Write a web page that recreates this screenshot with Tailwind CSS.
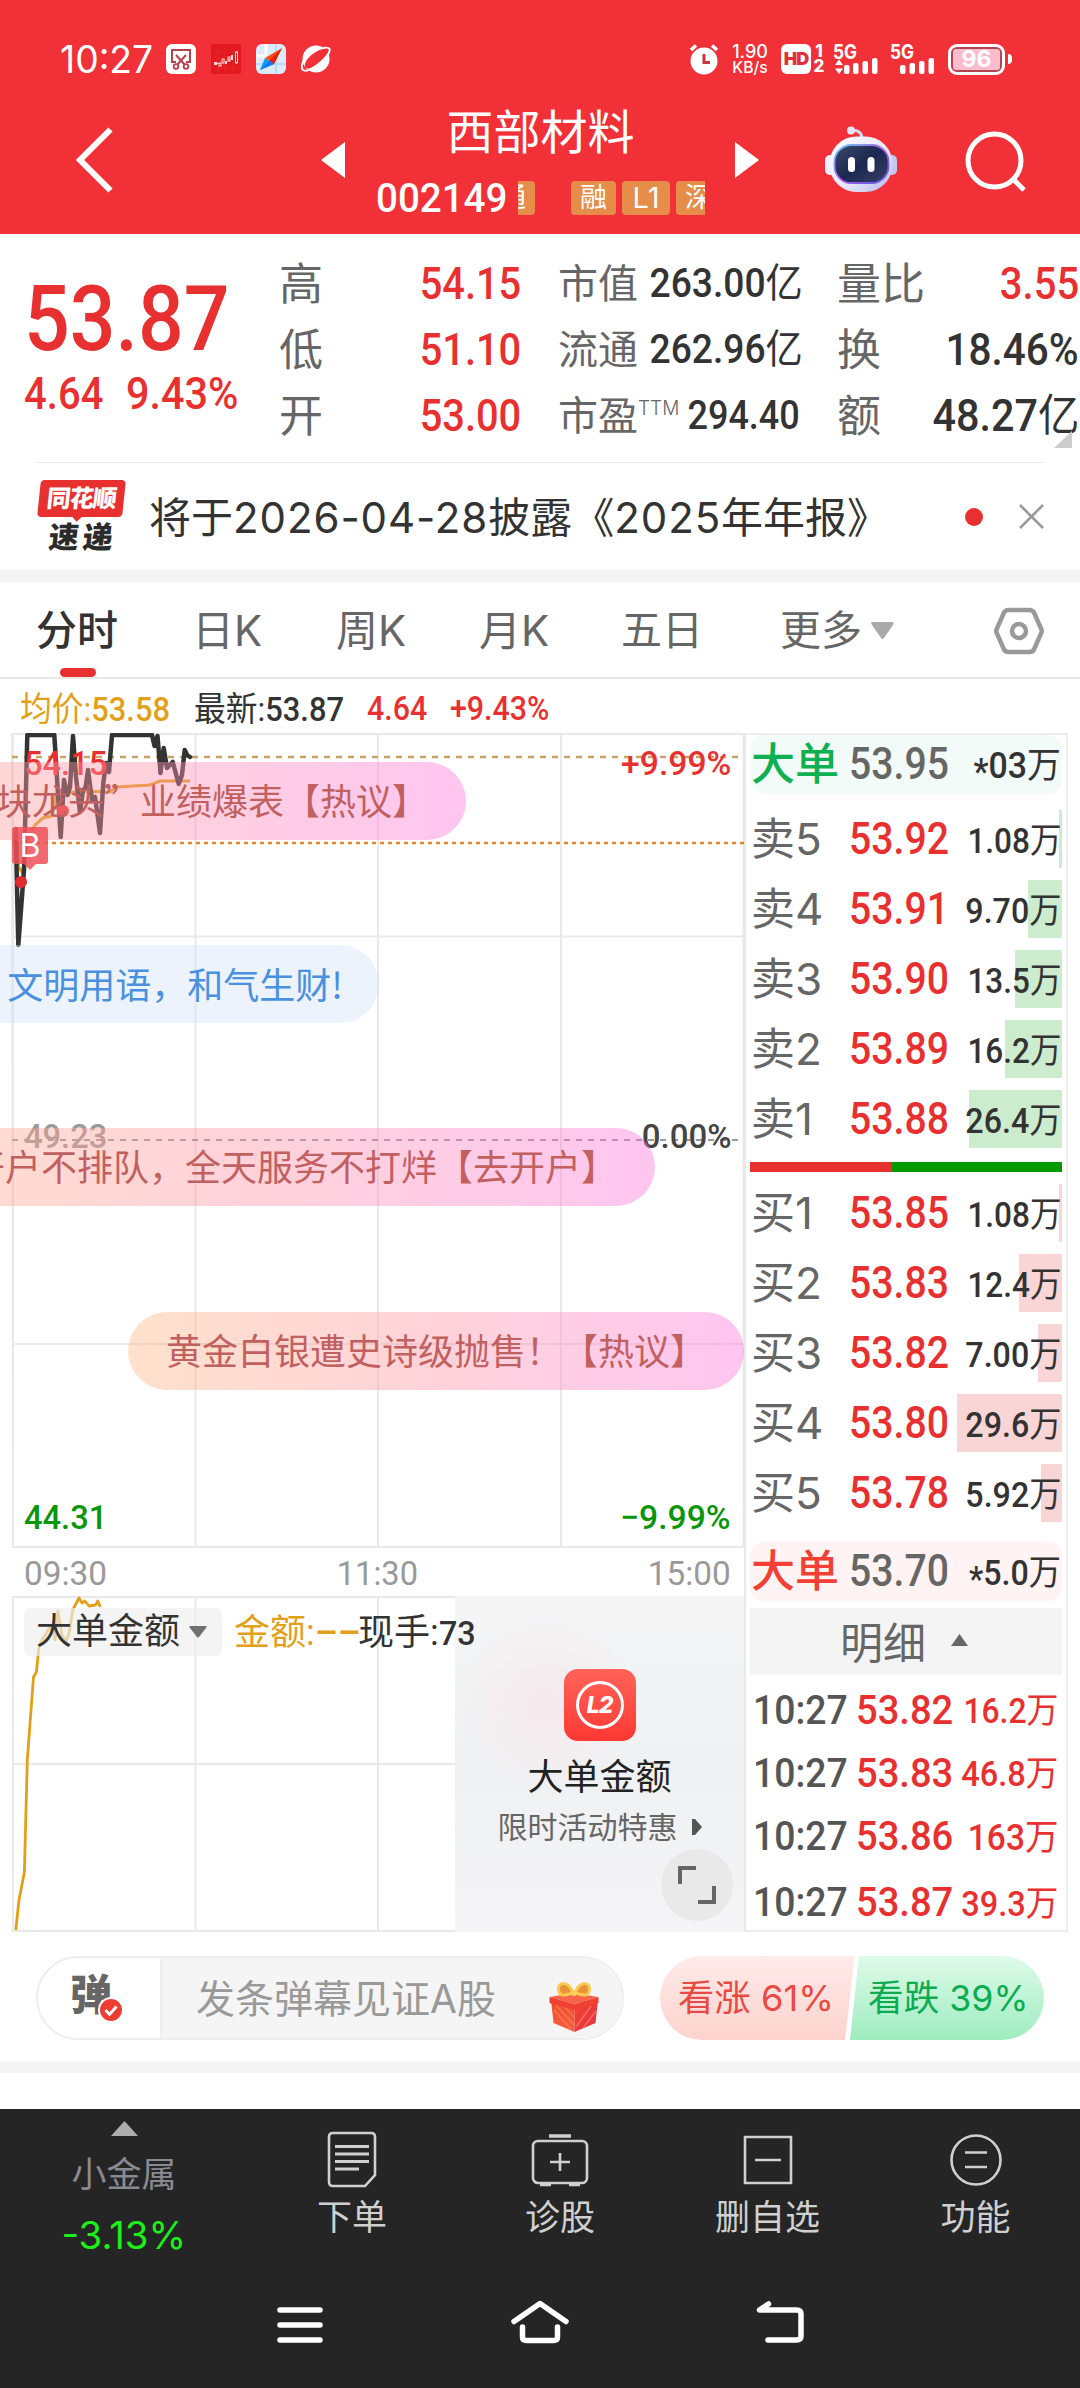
<!DOCTYPE html>
<html lang="zh-CN">
<head>
<meta charset="utf-8">
<title>西部材料 002149</title>
<script src="https://cdn.jsdelivr.net/npm/@tailwindcss/browser@4"></script>
</head>
<body class="bg-white">
<div class="relative flex h-[2388px] w-[1080px] flex-col overflow-hidden bg-white leading-none whitespace-nowrap text-[#333] [font-family:Inter,'Noto_Sans_CJK_SC',sans-serif]">

  <!-- Header -->
  <header class="h-[234px] shrink-0 bg-[#f23038] text-white">
    <div class="flex h-[100px] items-center pt-[18px] pl-[60px]">
      <span class="w-[106px] origin-left scale-x-[.98] text-[38px]">10:27</span>
      <svg class="mr-[15px]" width="30" height="30" viewBox="0 0 30 30" fill="none"><rect width="30" height="30" rx="6" fill="#fff"/><path d="M10 18H6V6h18v12h-4M10 11l9 10M20 11l-9 10" stroke="#b84048" stroke-width="2"/><circle cx="10" cy="22.500" r="2.300" stroke="#b84048" stroke-width="1.800"/><circle cx="20" cy="22.500" r="2.300" stroke="#b84048" stroke-width="1.800"/></svg>
      <svg class="mr-[15px]" width="30" height="30" viewBox="0 0 30 30" fill="none"><rect width="30" height="30" rx="2" fill="#e2191e"/><path d="M0 8h30M0 16h30M0 24h30M7 0v30M14 0v30M22 0v30" stroke="#e72a2f" stroke-width=".8"/><g fill="#ffd9d5"><rect x="3" y="18" width="3" height="3"/><rect x="14" y="17" width="2" height="3"/><rect x="20" y="11" width="2" height="5"/></g><g stroke="#ffd9d5" stroke-width="1"><rect x="8" y="19" width="2" height="3"/><path d="M6 19.500h2M18 14.500v3"/><rect x="11" y="15" width="2" height="4"/><rect x="17" y="13" width="2" height="4"/><rect x="24.500" y="8" width="2" height="11"/></g></svg>
      <svg class="mr-[15px]" width="30" height="30" viewBox="0 0 30 30"><rect width="30" height="30" rx="6" fill="#dcebfb"/><path d="M10 0v12H0" fill="none" stroke="#fff" stroke-width="3"/><path d="M20 0v30M0 20h30" stroke="#a9d9f3" stroke-width="1.500"/><path d="M26 4L9 14l9 6z" fill="#fb4d10"/><path d="M26 4L13 17l5 3z" fill="#e5200e"/><path d="M4 26L9 14l9 6z" fill="#0a9bfb"/><path d="M4 26l9-9 5 3z" fill="#0a78f2"/></svg>
      <svg width="30" height="30" viewBox="0 0 30 30"><circle cx="15" cy="15" r="13.500" fill="#fff"/><path d="M5 24C1 20 8 12 14 8.500S27 3 28 6 21 17 16 20.500 8 26 5 24z" fill="#f23038"/><path d="M4 14C1 19 0 24 2 26c3 2 9-1 15-5.500C24 15 30 8 28.500 5 27.500 3 24.500 3.500 22 4" fill="none" stroke="#fff" stroke-width="2"/></svg>

      <svg class="ml-[358px]" width="30" height="31" viewBox="0 0 30 31" fill="none"><circle cx="15" cy="17" r="13.500" fill="#fff"/><path d="M2 6l5-4.500M28 6l-5-4.500" stroke="#fff" stroke-width="3.500"/><path d="M15 10v8.500h6" stroke="#c9353c" stroke-width="3"/></svg>
      <span class="ml-[12px] flex w-[38px] flex-col items-center gap-[1px] text-[18px] leading-[15px] font-medium"><span>1.90</span><span class="origin-center scale-x-[.98] text-[16px]">KB/s</span></span>
      <span class="ml-[12px] flex h-[30px] w-[30px] items-center justify-center rounded-[6px] bg-white text-[18px] font-black tracking-[-1px] text-[#e23038]">HD</span>
      <span class="ml-[3px] flex w-[10px] flex-col items-center text-[17px] leading-[15px] font-extrabold"><span>1</span><span>2</span></span>
      <svg class="ml-[9px] overflow-visible" width="50" height="30" viewBox="0 0 50 30" fill="#fff"><text x="0" y="14.500" font-size="20" font-weight="700" textLength="24" lengthAdjust="spacingAndGlyphs">5G</text><path d="M6 15.500l4 5.500H2zM6 30l4-5.500H2z"/><rect x="11" y="21" width="5.500" height="9" rx="2"/><rect x="20" y="19" width="5.500" height="11" rx="2"/><rect x="29.500" y="17" width="5.500" height="13" rx="2"/><rect x="39" y="14" width="5.500" height="16" rx="2"/></svg>
      <svg class="ml-[7px] overflow-visible" width="50" height="30" viewBox="0 0 50 30" fill="#fff"><text x="0" y="14.500" font-size="20" font-weight="700" textLength="24" lengthAdjust="spacingAndGlyphs">5G</text><rect x="10" y="21" width="5.500" height="9" rx="2"/><rect x="19.500" y="19" width="5.500" height="11" rx="2"/><rect x="29" y="17" width="5.500" height="13" rx="2"/><rect x="38.500" y="14" width="5.500" height="16" rx="2"/></svg>
      <span class="ml-[8px] flex h-[31px] w-[57px] items-center justify-center rounded-[9px] border-[3px] border-white bg-[#b5434b] p-[2px]"><span class="flex h-full w-full items-center justify-center rounded-[3px] bg-[#fbbdcd] text-[23px] font-bold">96</span></span>
      <span class="ml-[3px] h-[10px] w-[4px] rounded-r-full bg-white"></span>
    </div>
    <div class="flex h-[120px] items-center">
      <svg class="ml-[72px]" width="46" height="72" viewBox="72 124 46 72" fill="none" stroke="#fff" stroke-width="6"><path d="M110.500 129.500L80 160l30.500 30.500"/></svg>
      <svg class="ml-[203px]" width="24" height="36" viewBox="0 0 24 36"><path d="M24 0v36L0 18z" fill="#fff"/></svg>
      <div class="ml-[31px] w-[329px] self-start">
        <h1 class="flex h-[62px] items-center justify-center text-[47px] font-normal">西部材料</h1>
        <div class="mt-[19px] flex h-[34px] items-center">
          <span class="w-[142px] shrink-0 origin-left scale-x-[.94] text-[41px] font-medium [font-family:Roboto]">002149</span>
          <div class="flex w-[187px] shrink-0 overflow-hidden text-[27px] leading-[34px]">
            <span class="-ml-[28px] h-[34px] w-[45px] shrink-0 rounded-[4px] bg-[#e58d49] text-center">通</span>
            <span class="ml-[36px] h-[34px] w-[45px] shrink-0 rounded-[4px] bg-[#e58d49] text-center">融</span>
            <span class="ml-[6px] h-[34px] w-[48px] shrink-0 rounded-[4px] bg-[#e58d49] text-center text-[29px]">L1</span>
            <span class="ml-[6px] h-[34px] w-[45px] shrink-0 rounded-[4px] bg-[#e58d49] text-center">深</span>
          </div>
        </div>
      </div>
      <svg class="ml-[30px]" width="24" height="36" viewBox="0 0 24 36"><path d="M0 0v36l24-18z" fill="#fff"/></svg>
      <svg class="ml-[66px]" width="72" height="68" viewBox="825 126 72 68">
        <defs>
          <linearGradient id="shell" x1="0" y1="0" x2="1" y2="1"><stop offset="0" stop-color="#fff"/><stop offset=".6" stop-color="#e6e4fa"/><stop offset="1" stop-color="#b3b6e8"/></linearGradient>
          <linearGradient id="face" x1="0" y1="0" x2="1" y2="1"><stop offset="0" stop-color="#3b4a6e"/><stop offset=".5" stop-color="#1b2850"/><stop offset="1" stop-color="#3a3f68"/></linearGradient>
          <linearGradient id="rim" x1="0" y1="0" x2="1" y2="1"><stop offset="0" stop-color="#69d6f2"/><stop offset=".5" stop-color="#a855e8"/><stop offset="1" stop-color="#5b5be6"/></linearGradient>
        </defs>
        <path d="M851 131c8-2 11 3 11 8" fill="none" stroke="#dcd9f4" stroke-width="3"/><circle cx="851" cy="130.500" r="4" fill="#e6e3f8"/>
        <rect x="825" y="155" width="12" height="20" rx="5" fill="#eeeefc"/><rect x="885" y="155" width="12" height="20" rx="5" fill="#c4c8ee"/>
        <rect x="829.500" y="136.500" width="63" height="55.500" rx="27" fill="url(#shell)"/>
        <rect x="834.500" y="145" width="54" height="38" rx="17" fill="url(#face)" stroke="url(#rim)" stroke-width="1.800"/>
        <rect x="848" y="157" width="7" height="15" rx="3.500" fill="#fff"/><rect x="867.500" y="157" width="7" height="15" rx="3.500" fill="#fff"/>
      </svg>
      <svg class="ml-[66px]" width="66" height="66" viewBox="963 127 66 66" fill="none" stroke="#fff" stroke-width="5"><circle cx="994.500" cy="160.500" r="26.500"/><path d="M1013 179l11 11"/></svg>
    </div>
  </header>

  <!-- Quote summary -->
  <section class="flex h-[228px] shrink-0 text-[44px] text-[#666]">
    <div class="w-[279px] pt-[31px] pl-[24px] font-medium text-[#e93030] [font-family:Roboto]">
      <div class="flex h-[110px] items-center text-[90px]"><span class="origin-left scale-x-[.895]">53.87</span></div>
      <div class="flex h-[38px] items-center text-[44px]"><span class="w-[102px] origin-left scale-x-[.91]">4.64</span><span class="origin-left scale-x-[.94]">9.43%</span></div>
    </div>
    <div class="w-[242px] pt-[17px]">
      <div class="flex h-[66px] items-center justify-between"><span>高</span><span class="origin-right scale-x-[.905] font-medium text-[#e93030] [font-family:Roboto]">54.15</span></div>
      <div class="flex h-[66px] items-center justify-between"><span>低</span><span class="origin-right scale-x-[.905] font-medium text-[#e93030] [font-family:Roboto]">51.10</span></div>
      <div class="flex h-[66px] items-center justify-between"><span>开</span><span class="origin-right scale-x-[.905] font-medium text-[#e93030] [font-family:Roboto]">53.00</span></div>
    </div>
    <div class="ml-[37px] w-[242px] pt-[17px] text-[40px]">
      <div class="flex h-[66px] items-center justify-between"><span>市值</span><span class="origin-right scale-x-[.93] font-medium text-[#333] [font-family:Roboto,'Noto_Sans_CJK_SC']">263.00<span class="font-normal">亿</span></span></div>
      <div class="flex h-[66px] items-center justify-between"><span>流通</span><span class="origin-right scale-x-[.93] font-medium text-[#333] [font-family:Roboto,'Noto_Sans_CJK_SC']">262.96<span class="font-normal">亿</span></span></div>
      <div class="flex h-[66px] items-center justify-between"><span class="flex w-[100px]">市盈<span class="mt-[2px] origin-left scale-x-[.95] text-[20px] font-light">TTM</span></span><span class="origin-right scale-x-[.9] font-medium text-[#333] [font-family:Roboto]">294.40</span></div>
    </div>
    <div class="relative ml-[37px] w-[242px] pt-[17px]">
      <div class="flex h-[66px] items-center justify-between"><span>量比</span><span class="origin-right scale-x-[.91] font-medium text-[#e93030] [font-family:Roboto]">3.55</span></div>
      <div class="flex h-[66px] items-center justify-between"><span>换</span><span class="origin-right scale-x-[.92] font-medium text-[#333] [font-family:Roboto]">18.46%</span></div>
      <div class="flex h-[66px] items-center justify-between"><span>额</span><span class="origin-right scale-x-[.94] font-medium text-[#333] [font-family:Roboto,'Noto_Sans_CJK_SC']">48.27<span class="font-normal">亿</span></span></div>
      <svg class="absolute top-[197px] right-[7px]" width="18" height="17" viewBox="0 0 18 17"><path d="M18 0v17H0z" fill="#ccc"/></svg>
    </div>
  </section>

  <!-- Announcement -->
  <section class="mx-[36px] flex h-[108px] shrink-0 items-center border-t border-[#e9e9e9]">
    <div class="flex h-[74px] w-[90px] flex-col items-center">
      <div class="relative flex h-[37px] w-[85px] -skew-x-6 items-center justify-center rounded-[4px] bg-[#e93030] text-[24px] font-black tracking-[-1px] text-white">同花顺
        <span class="absolute -bottom-[3px] left-[36px] h-[8px] w-[8px] rotate-45 bg-[#e93030]"></span>
      </div>
      <div class="mt-[5px] flex h-[30px] -skew-x-6 items-center gap-[4px] text-[30px] font-black text-[#2b2b2b]"><span>速</span><span>递</span></div>
    </div>
    <p class="ml-[23px] w-[816px] shrink-0 pt-[2px] text-[42px]">将于<span class="tracking-[.9px]">2026-04-28</span>披露《<span class="tracking-[.9px]">2025</span>年年报》</p>
    <span class="h-[18px] w-[18px] shrink-0 rounded-full bg-[#e93030]"></span>
    <svg class="ml-auto shrink-0" width="25" height="25" viewBox="0 0 25 25" stroke="#999" stroke-width="2.600"><path d="M1 1l23 23M24 1L1 24"/></svg>
  </section>
  <div class="h-[12px] shrink-0 bg-[#f4f4f4]"></div>

  <!-- Chart tabs -->
  <nav class="flex h-[97px] shrink-0 items-center border-b-2 border-[#e8e8e8] pt-[2px] text-[41px] text-[#666]">
    <div class="relative ml-[36px] flex h-full w-[156px] items-center font-medium text-[#333]">分时<span class="absolute bottom-0 left-[24px] h-[9px] w-[36px] rounded-full bg-[#e93030]"></span></div>
    <span class="w-[144px] text-[42px]">日K</span>
    <span class="w-[143px] text-[42px]">周K</span>
    <span class="w-[142px] text-[42px]">月K</span>
    <span class="w-[159px]">五日</span>
    <span class="flex w-[213px] items-center gap-[9px]">更多<svg width="23" height="18" viewBox="0 0 23 18"><path d="M2 0h19q3 0 1 3L13 16q-1.500 2-3 0L1 3Q-1 0 2 0z" fill="#aaa"/></svg></span>
    <svg class="ml-[1px]" width="50" height="48" viewBox="995 606 50 48" fill="none" stroke="#999" stroke-width="4.500"><path d="M1009.500 609h21q3 0 4.500 2.500l7 16q1.500 2.500 0 5l-7 16q-1.500 2.500-4.500 2.500h-21q-3 0-4.500-2.500l-7-16q-1.500-2.500 0-5l7-16q1.500-2.500 4.500-2.500z"/><circle cx="1020" cy="630" r="7"/></svg>
  </nav>

  <!-- Average / latest price -->
  <div class="flex h-[54px] shrink-0 items-center pt-[5px] pl-[20px] text-[34px] [font-family:Roboto,'Noto_Sans_CJK_SC']">
    <span class="w-[174px] origin-left scale-x-[.935] text-[#e2a01a]">均价:<span class="text-[33px] font-medium">53.58</span></span>
    <span class="w-[173px] origin-left scale-x-[.935]">最新:<span class="text-[33px] font-medium">53.87</span></span>
    <span class="w-[83px] origin-left scale-x-[.92] text-[33px] font-medium text-[#e93030]">4.64</span>
    <span class="origin-left scale-x-[.92] text-[33px] font-medium text-[#e93030]">+9.43%</span>
  </div>

  <main class="flex h-[1199px] shrink-0">
    <!-- Charts -->
    <div class="w-[744px] shrink-0">
      <div class="relative h-[815px] overflow-hidden">
        <svg class="absolute inset-0" width="744" height="815" viewBox="0 733 744 815" fill="none">
          <g stroke="#e9e9e9" stroke-width="2"><path d="M12 734h731.500v813H13zM13 733v815M195.500 734v813M378 734v813M561 734v813M12 936.500h732M12 1344h732"/></g>
          <path d="M12 1140h728" stroke="#999" stroke-width="2" stroke-dasharray="6 6"/>
          <path d="M12 757h728" stroke="#c8a468" stroke-width="2.500" stroke-dasharray="6 6"/>
          <path d="M12 843h732" stroke="#e8832a" stroke-width="2.500" stroke-dasharray="4 4"/>
          <path d="M16 830l2.500 37 4 6 5.500-36 7-12 8-7 9-2 4-21 24-4 30 1 7-5 33-2 10-4h30" stroke="#e2a01a" stroke-width="3"/>
          <path d="M15.700 829L18.300 945 24 870 27.300 735H54.300L60.700 837 64 780 67.500 795 70 787 73 736 76 777 80 812 83 790 85.500 788 88 770 92 800 95 797 100 833 103.300 783 106 763 109 772 112 735H152L154.500 746 157.500 736 160.500 773 163.700 748 167 768 172.700 762 178.700 784 182 775 184.700 750 187 755 190 757" stroke="#333" stroke-width="4.500" stroke-linejoin="round" stroke-linecap="round"/>
          <circle cx="21" cy="882" r="6" fill="#e02a30"/><circle cx="63" cy="811" r="6" fill="#e93030"/>
        </svg>
        <div class="absolute inset-x-0 top-[10px] flex h-[40px] items-center justify-between pr-[13px] pl-[24px] text-[34px] font-medium text-[#e93030] [font-family:Roboto]"><span class="origin-left scale-x-[.96]">54.15</span><span class="origin-right scale-x-[.99]">+9.99%</span></div>
        <div class="absolute inset-x-0 top-[383px] flex h-[40px] items-center justify-between pr-[13px] pl-[24px] text-[34px] font-medium text-[#999] [font-family:Roboto]"><span class="origin-left scale-x-[.96]">49.23</span><span class="origin-right scale-x-[.97] text-[#444]">0.00%</span></div>
        <div class="absolute inset-x-0 top-[764px] flex h-[40px] items-center justify-between pr-[13px] pl-[24px] text-[34px] font-medium text-[#099609] [font-family:Roboto]"><span class="origin-left scale-x-[.96]">44.31</span><span class="origin-right scale-x-[.99]">−9.99%</span></div>

        <!-- Floating comments -->
        <div class="absolute top-[29px] right-[278px] flex h-[78px] w-[740px] items-center justify-end rounded-full bg-linear-to-r from-[#ffb785]/42 via-[#ff95a6]/42 to-[#fd76db]/42 pr-[38px] pb-[4px] text-[36px] text-[#c1605f] [font-family:'Noto_Sans_CJK_SC']">“板块龙头”业绩爆表【热议】</div>
        <div class="absolute top-[212px] right-[365px] flex h-[78px] w-[420px] items-center justify-end rounded-full bg-[#d2e2fa]/42 pr-[36px] pb-[3px] text-[36px] text-[#4a90e0] [font-family:'Noto_Sans_CJK_SC']">文明用语，和气生财!</div>
        <div class="absolute top-[395px] right-[89px] flex h-[78px] w-[830px] items-center justify-end rounded-full bg-linear-to-r from-[#ffb785]/42 via-[#ff95a6]/42 to-[#fd76db]/42 pr-[38px] pb-[4px] text-[36px] text-[#c1605f] [font-family:'Noto_Sans_CJK_SC']">开户不排队，全天服务不打烊【去开户】</div>
        <div class="absolute top-[579px] right-0 flex h-[78px] w-[616px] items-center justify-end rounded-full bg-linear-to-r from-[#ffb785]/42 via-[#ff95a6]/42 to-[#fd76db]/42 pr-[38px] pb-[4px] text-[36px] text-[#c1605f] [font-family:'Noto_Sans_CJK_SC']">黄金白银遭史诗级抛售！【热议】</div>

        <!-- Buy marker -->
        <div class="absolute top-[94px] left-[12px] flex h-[37px] w-[36px] items-center justify-center rounded-[3px] bg-[#ef5058]/85 text-[32px] text-white">B
          <svg class="absolute top-[37px] left-[12px]" width="12" height="6" viewBox="0 0 12 6"><path d="M0 0h12L6 6z" fill="#ef5058" fill-opacity=".85"/></svg>
        </div>
      </div>
      <div class="flex h-[48px] items-center justify-between pt-[1px] pr-[13px] pl-[24px] text-[34px] text-[#999] [font-family:Roboto]"><span class="origin-left scale-x-[.98]">09:30</span><span class="scale-x-[.96]">11:30</span><span class="origin-right scale-x-[.98]">15:00</span></div>

      <div class="relative flex h-[336px]">
        <svg class="absolute inset-0" width="744" height="336" viewBox="0 1596 744 336" fill="none">
          <path d="M13 1597h730v334H13zM195.500 1597v334M378 1597v334M12 1764h732" stroke="#e9e9e9" stroke-width="2"/>
          <path d="M15.800 1930L19 1900 24.400 1872 27.300 1760 33.500 1677 36.400 1672 39.200 1645 48 1630 52.600 1625 55 1640 58 1611 62 1635 66 1642 69.400 1632 72.700 1610 79 1598 82 1603 85 1601 89 1606 95.700 1605 97.600 1601 100.400 1607" stroke="#e2a01a" stroke-width="2.800" stroke-linejoin="round"/>
        </svg>
        <div class="relative flex h-[48px] w-[455px] shrink-0 items-center self-start pt-[24px] pl-[24px] text-[36px]">
          <div class="flex h-[48px] w-[198px] shrink-0 items-center gap-[9px] rounded-[6px] bg-[#eeeeee]/65 pl-[12px] [font-family:Roboto,'Noto_Sans_CJK_SC']">大单金额<svg width="18" height="12" viewBox="0 0 18 12"><path d="M1.500 0h15Q18.500 0 17 2l-7 9q-1 1.200-2 0L1 2Q-.5 0 1.500 0z" fill="#707070"/></svg></div>
          <div class="relative z-10 flex shrink-0 pt-[2px] pl-[12px] [font-family:Roboto,'Noto_Sans_CJK_SC']"><span class="w-[124px] text-[#e2a01a]">金额:<span class="font-medium">––</span></span><span>现手:<span class="inline-block origin-left scale-x-[.95] text-[34px] font-medium">73</span></span></div>
        </div>
        <div class="relative flex w-[289px] flex-col items-center bg-linear-to-b from-[#f5f5f6] via-[#eff1f2] to-[#f5f4f8] pt-[73px]">
          <div class="absolute top-[20px] left-0 h-[180px] w-[180px] bg-radial from-[#f5e9ec] to-transparent to-70%"></div>
          <div class="relative flex h-[72px] w-[72px] shrink-0 items-center justify-center rounded-[14px] bg-linear-to-b from-[#ff6259] to-[#fc3732]"><span class="flex h-[48px] w-[48px] items-center justify-center rounded-full border-[3px] border-white text-[23px] font-extrabold tracking-[-1px] text-white italic">L2</span></div>
          <div class="relative mt-[18px] text-[36px] leading-[36px] text-[#222]">大单金额</div>
          <div class="relative mt-[17px] flex items-center gap-[14px] text-[30px] leading-[30px] text-[#666]">限时活动特惠<svg width="10" height="16" viewBox="0 0 10 16"><path d="M0 0l3 0 7 8-7 8H0z" fill="#555"/></svg></div>
          <div class="absolute right-[11px] bottom-[11px] flex h-[72px] w-[72px] items-center justify-center rounded-full bg-[#e9e9ea]"><svg width="38" height="38" viewBox="0 0 38 38" fill="none" stroke="#666" stroke-width="4"><path d="M2 18V2h16M36 20v16H20"/></svg></div>
        </div>
      </div>
    </div>

    <!-- Order book -->
    <aside class="w-[324px] shrink-0 border-2 border-[#eee] pl-[4px] text-[44px] text-[#666] border-l-[#e9e9e9]">
      <div class="grid h-[59px] w-[312px] grid-cols-[98px_108px_104px] items-center rounded-[14px] bg-[#f2fbf7] pb-[2px] pl-[1px]"><span class="font-medium text-[#0eb052]">大单</span><span class="origin-left scale-x-[.89] font-medium [font-family:Roboto]">53.95</span><span class="mt-[5px] origin-right scale-x-[.94] justify-self-end text-[36px] font-medium text-[#333] [font-family:Roboto,'Noto_Sans_CJK_SC']"><span class="inline-block translate-y-[6px]">*</span>03<span class="font-normal">万</span></span></div>
      <div class="mt-[10px] w-[312px]">
        <div class="relative grid h-[70px] grid-cols-[98px_108px_104px] items-center pl-[1px]"><i class="absolute top-[6px] right-0 h-[58px] bg-[#cdebcd]" style="width:3px"></i><span>卖5</span><span class="origin-left scale-x-[.89] font-medium text-[#e93030] [font-family:Roboto]">53.92</span><span class="relative mt-[5px] origin-right scale-x-[.9] justify-self-end text-[35px] font-medium text-[#333] [font-family:Roboto,'Noto_Sans_CJK_SC']">1.08<span class="font-normal">万</span></span></div>
        <div class="relative grid h-[70px] grid-cols-[98px_108px_104px] items-center pl-[1px]"><i class="absolute top-[6px] right-0 h-[58px] bg-[#cdebcd]" style="width:34px"></i><span>卖4</span><span class="origin-left scale-x-[.89] font-medium text-[#e93030] [font-family:Roboto]">53.91</span><span class="relative mt-[5px] origin-right scale-x-[.92] justify-self-end text-[35px] font-medium text-[#333] [font-family:Roboto,'Noto_Sans_CJK_SC']">9.70<span class="font-normal">万</span></span></div>
        <div class="relative grid h-[70px] grid-cols-[98px_108px_104px] items-center pl-[1px]"><i class="absolute top-[6px] right-0 h-[58px] bg-[#cdebcd]" style="width:47px"></i><span>卖3</span><span class="origin-left scale-x-[.89] font-medium text-[#e93030] [font-family:Roboto]">53.90</span><span class="relative mt-[5px] origin-right scale-x-[.9] justify-self-end text-[35px] font-medium text-[#333] [font-family:Roboto,'Noto_Sans_CJK_SC']">13.5<span class="font-normal">万</span></span></div>
        <div class="relative grid h-[70px] grid-cols-[98px_108px_104px] items-center pl-[1px]"><i class="absolute top-[6px] right-0 h-[58px] bg-[#cdebcd]" style="width:57px"></i><span>卖2</span><span class="origin-left scale-x-[.89] font-medium text-[#e93030] [font-family:Roboto]">53.89</span><span class="relative mt-[5px] origin-right scale-x-[.9] justify-self-end text-[35px] font-medium text-[#333] [font-family:Roboto,'Noto_Sans_CJK_SC']">16.2<span class="font-normal">万</span></span></div>
        <div class="relative grid h-[70px] grid-cols-[98px_108px_104px] items-center pl-[1px]"><i class="absolute top-[6px] right-0 h-[58px] bg-[#cdebcd]" style="width:93px"></i><span>卖1</span><span class="origin-left scale-x-[.89] font-medium text-[#e93030] [font-family:Roboto]">53.88</span><span class="relative mt-[5px] origin-right scale-x-[.92] justify-self-end text-[35px] font-medium text-[#333] [font-family:Roboto,'Noto_Sans_CJK_SC']">26.4<span class="font-normal">万</span></span></div>
      </div>
      <div class="mt-[8px] flex h-[10px] w-[312px] bg-[#009900]"><span class="bg-[#e93030]" style="width:142px"></span></div>
      <div class="mt-[6px] w-[312px]">
        <div class="relative grid h-[70px] grid-cols-[98px_108px_104px] items-center pl-[1px]"><i class="absolute top-[6px] right-0 h-[58px] bg-[#fad5d6]" style="width:3px"></i><span>买1</span><span class="origin-left scale-x-[.89] font-medium text-[#e93030] [font-family:Roboto]">53.85</span><span class="relative mt-[5px] origin-right scale-x-[.9] justify-self-end text-[35px] font-medium text-[#333] [font-family:Roboto,'Noto_Sans_CJK_SC']">1.08<span class="font-normal">万</span></span></div>
        <div class="relative grid h-[70px] grid-cols-[98px_108px_104px] items-center pl-[1px]"><i class="absolute top-[6px] right-0 h-[58px] bg-[#fad5d6]" style="width:43px"></i><span>买2</span><span class="origin-left scale-x-[.89] font-medium text-[#e93030] [font-family:Roboto]">53.83</span><span class="relative mt-[5px] origin-right scale-x-[.9] justify-self-end text-[35px] font-medium text-[#333] [font-family:Roboto,'Noto_Sans_CJK_SC']">12.4<span class="font-normal">万</span></span></div>
        <div class="relative grid h-[70px] grid-cols-[98px_108px_104px] items-center pl-[1px]"><i class="absolute top-[6px] right-0 h-[58px] bg-[#fad5d6]" style="width:24px"></i><span>买3</span><span class="origin-left scale-x-[.89] font-medium text-[#e93030] [font-family:Roboto]">53.82</span><span class="relative mt-[5px] origin-right scale-x-[.92] justify-self-end text-[35px] font-medium text-[#333] [font-family:Roboto,'Noto_Sans_CJK_SC']">7.00<span class="font-normal">万</span></span></div>
        <div class="relative grid h-[70px] grid-cols-[98px_108px_104px] items-center pl-[1px]"><i class="absolute top-[6px] right-0 h-[58px] bg-[#fad5d6]" style="width:105px"></i><span>买4</span><span class="origin-left scale-x-[.89] font-medium text-[#e93030] [font-family:Roboto]">53.80</span><span class="relative mt-[5px] origin-right scale-x-[.92] justify-self-end text-[35px] font-medium text-[#333] [font-family:Roboto,'Noto_Sans_CJK_SC']">29.6<span class="font-normal">万</span></span></div>
        <div class="relative grid h-[70px] grid-cols-[98px_108px_104px] items-center pl-[1px]"><i class="absolute top-[6px] right-0 h-[58px] bg-[#fad5d6]" style="width:21px"></i><span>买5</span><span class="origin-left scale-x-[.89] font-medium text-[#e93030] [font-family:Roboto]">53.78</span><span class="relative mt-[5px] origin-right scale-x-[.92] justify-self-end text-[35px] font-medium text-[#333] [font-family:Roboto,'Noto_Sans_CJK_SC']">5.92<span class="font-normal">万</span></span></div>
      </div>
      <div class="mt-[14px] grid h-[59px] w-[312px] grid-cols-[98px_108px_104px] items-center rounded-[14px] bg-[#fff3f3] pb-[2px] pl-[1px]"><span class="font-medium text-[#f24034]">大单</span><span class="origin-left scale-x-[.89] font-medium [font-family:Roboto]">53.70</span><span class="mt-[5px] origin-right scale-x-[.92] justify-self-end text-[35px] font-medium text-[#333] [font-family:Roboto,'Noto_Sans_CJK_SC']"><span class="inline-block translate-y-[6px]">*</span>5.0<span class="font-normal">万</span></span></div>
      <div class="mt-[7px] flex h-[67px] w-[312px] items-center gap-[25px] bg-[#f4f4f4] pt-[3px] pl-[90px] text-[43px]">明细<svg class="-mt-[6px]" width="17" height="12" viewBox="0 0 17 12"><path d="M8.500 0L17 12H0z" fill="#666"/></svg></div>
      <div class="mt-[3px] w-[312px] text-[41px] font-medium [font-family:Roboto,'Noto_Sans_CJK_SC']">
        <div class="grid h-[63px] grid-cols-[103px_100px_102px] items-center pt-[1px] pl-[3px]"><span class="origin-left scale-x-[.91] text-[#555]">10:27</span><span class="origin-left scale-x-[.93] text-[#e93030]">53.82</span><span class="mt-[3px] origin-right scale-x-[.91] justify-self-end text-[35px] text-[#e93030]">16.2<span class="font-normal">万</span></span></div>
        <div class="grid h-[63px] grid-cols-[103px_100px_102px] items-center pt-[1px] pl-[3px]"><span class="origin-left scale-x-[.91] text-[#555]">10:27</span><span class="origin-left scale-x-[.93] text-[#e93030]">53.83</span><span class="mt-[3px] origin-right scale-x-[.93] justify-self-end text-[35px] text-[#e93030]">46.8<span class="font-normal">万</span></span></div>
        <div class="grid h-[63px] grid-cols-[103px_100px_102px] items-center pt-[1px] pl-[3px]"><span class="origin-left scale-x-[.91] text-[#555]">10:27</span><span class="origin-left scale-x-[.93] text-[#e93030]">53.86</span><span class="mt-[3px] origin-right scale-x-[.93] justify-self-end text-[36px] text-[#e93030]">163<span class="font-normal">万</span></span></div>
        <div class="mt-[5px] grid h-[55px] grid-cols-[103px_100px_102px] items-center pt-[6px] pl-[3px]"><span class="origin-left scale-x-[.91] text-[#555]">10:27</span><span class="origin-left scale-x-[.93] text-[#e93030]">53.87</span><span class="mt-[3px] origin-right scale-x-[.93] justify-self-end text-[35px] text-[#e93030]">39.3<span class="font-normal">万</span></span></div>
      </div>
    </aside>
  </main>

  <!-- Comment bar and poll -->
  <section class="flex h-[129px] shrink-0 items-start pt-[24px] pl-[36px]">
    <div class="flex h-[84px] w-[588px] overflow-hidden rounded-full border-2 border-[#eee] text-[39px] text-[#999]">
      <div class="relative flex w-[124px] shrink-0 items-center border-r-2 border-[#eee] pb-[6px] pl-[32px] text-[42px] font-black text-[#666]">弹
        <svg class="absolute top-[39px] left-[60px]" width="26" height="26" viewBox="0 0 26 26"><circle cx="13" cy="13" r="13" fill="#fff"/><circle cx="13" cy="13" r="11" fill="#ee3d33"/><path d="M7.500 13l4 4.500 7-8" fill="none" stroke="#fff" stroke-width="2.800"/></svg>
      </div>
      <div class="flex flex-1 items-center bg-[#f5f5f5] pl-[34px]"><span class="pt-[1px]">发条弹幕见证A股</span>
        <svg class="mt-[16px] ml-[53px]" width="50" height="54" viewBox="551 1979 50 54">
          <defs>
            <linearGradient id="gl" x1="0" y1="0" x2="0" y2="1"><stop offset="0" stop-color="#ee4a2c"/><stop offset="1" stop-color="#f7633c"/></linearGradient>
            <linearGradient id="gr" x1="0" y1="0" x2="1" y2="1"><stop offset="0" stop-color="#f2452e"/><stop offset="1" stop-color="#e5304e"/></linearGradient>
          </defs>
          <path d="M553 2000l23.500 7v25l-21-9z" fill="url(#gl)"/><path d="M600 2000l-23.500 7v25l21-9z" fill="url(#gr)"/>
          <path d="M556 2010l17 19M558 2005l18 20M567 2007l9 10M578 2027l15-21M585 2028l13-17" stroke="#ff8560" stroke-width="1.800" opacity=".6"/>
          <path d="M551.500 1997l23-4 26 4-24 7z" fill="#f9634a"/><path d="M551.500 1997l25 7v6l-25-7zM600.500 1997l-24 7v6l24-7z" fill="#ee4131"/>
          <path d="M575 1993c-2-7-8-11-12-9s-3 11 2 11 9-2 10-2zM577 1993c2-7 8-11 12-9s3 11-2 11-9-2-10-2z" fill="#e8923a" stroke="#fbc950" stroke-width="3"/><circle cx="576" cy="1993" r="3" fill="#fbd05c"/>
        </svg>
      </div>
    </div>
    <div class="relative ml-[36px] flex h-[84px] w-[384px] items-center text-[36px]">
      <svg class="absolute inset-0" width="384" height="84" viewBox="0 0 384 84">
        <defs>
          <linearGradient id="up" x1="0" y1="0" x2="0" y2="1"><stop offset="0" stop-color="#ffebea"/><stop offset="1" stop-color="#fdd3cd"/></linearGradient>
          <linearGradient id="down" x1="0" y1="0" x2="0" y2="1"><stop offset="0" stop-color="#defbea"/><stop offset="1" stop-color="#9eecbf"/></linearGradient>
        </defs>
        <path d="M42 0h152.500L185 84H42a42 42 0 010-84z" fill="url(#up)"/><path d="M199 0h143a42 42 0 010 84H190z" fill="url(#down)"/>
      </svg>
      <span class="relative w-[190px] pl-[18px] text-[#e94a43]"><span class="inline-block origin-left scale-x-[1.01]">看涨 61%</span></span>
      <span class="relative pl-[18px] text-[#0dac50]"><span class="inline-block origin-left scale-x-[.99]">看跌 39%</span></span>
    </div>
  </section>
  <div class="h-[12px] shrink-0 bg-[#f4f4f4]"></div>

  <!-- Bottom bar -->
  <footer class="mt-[36px] h-[279px] shrink-0 bg-[#252525] text-[35px] text-[#d0d0d0]">
    <div class="flex h-[165px]">
      <div class="flex w-[248px] flex-col items-center pt-[12px]">
        <svg width="27" height="15" viewBox="0 0 27 15"><path d="M13.500 0L27 15H0z" fill="#adadad"/></svg>
        <span class="mt-[20px] leading-[36px] text-[#8a8a92]">小金属</span>
        <span class="mt-[25px] origin-center scale-x-[1.01] text-[38px] leading-[36px] text-[#1bf01b]">-3.13%</span>
      </div>
      <div class="flex w-[208px] flex-col items-center pt-[22px]">
        <svg width="50" height="57" viewBox="0 0 50 57" fill="none" stroke="#d0d0d0" stroke-width="2.600"><path d="M6 2h38q4 0 4 4v38L38 55H6q-4 0-4-4V6q0-4 4-4z"/><path d="M8 15.500h34M8 23h34M8 30.500h34M8 38h24" stroke-width="3"/></svg>
        <span class="mt-[11px] leading-[36px]">下单</span>
      </div>
      <div class="flex w-[208px] flex-col items-center pt-[24px]">
        <svg width="58" height="54" viewBox="0 0 58 54" fill="none" stroke="#d0d0d0" stroke-width="2.600"><path d="M18 3h22" stroke-width="3.500"/><rect x="2" y="8" width="54" height="42" rx="5"/><path d="M29 20v18M19 29h20M9 52h11M38 52h11"/></svg>
        <span class="mt-[12px] leading-[36px]">诊股</span>
      </div>
      <div class="flex w-[207px] flex-col items-center pt-[26px]">
        <svg width="50" height="50" viewBox="0 0 50 50" fill="none" stroke="#d0d0d0" stroke-width="2.600"><path d="M2 2h46v46H2zM12 25h26"/></svg>
        <span class="mt-[14px] leading-[36px]">删自选</span>
      </div>
      <div class="flex w-[209px] flex-col items-center pt-[25px]">
        <svg width="52" height="52" viewBox="0 0 52 52" fill="none" stroke="#d0d0d0" stroke-width="2.600"><circle cx="26" cy="26" r="24.500"/><path d="M15 18.500h22M15 33h22"/></svg>
        <span class="mt-[13px] leading-[36px]">功能</span>
      </div>
    </div>
    <div class="flex h-[96px] items-center pl-[275px]">
      <svg width="50" height="48" viewBox="275 2298 50 48" stroke="#fff" stroke-width="5.500" stroke-linecap="round"><path d="M280 2310h40M280 2325h40M280 2340h40"/></svg>
      <svg class="ml-[184px]" width="62" height="48" viewBox="509 2298 62 48" fill="none" stroke="#fff" stroke-width="5.500" stroke-linecap="round" stroke-linejoin="round"><path d="M514 2321.500l26-18 26 18M522.500 2327v10q0 3.500 4 3.500h27q4 0 4-3.500v-10"/></svg>
      <svg class="ml-[183px]" width="54" height="48" viewBox="754 2298 54 48" fill="none" stroke="#fff" stroke-width="5.500" stroke-linecap="round" stroke-linejoin="round"><path d="M768.500 2304l-9 6h37q4.500 0 4.500 4v22q0 4-4.500 4H768"/></svg>
    </div>
  </footer>
</div>
</body>
</html>
